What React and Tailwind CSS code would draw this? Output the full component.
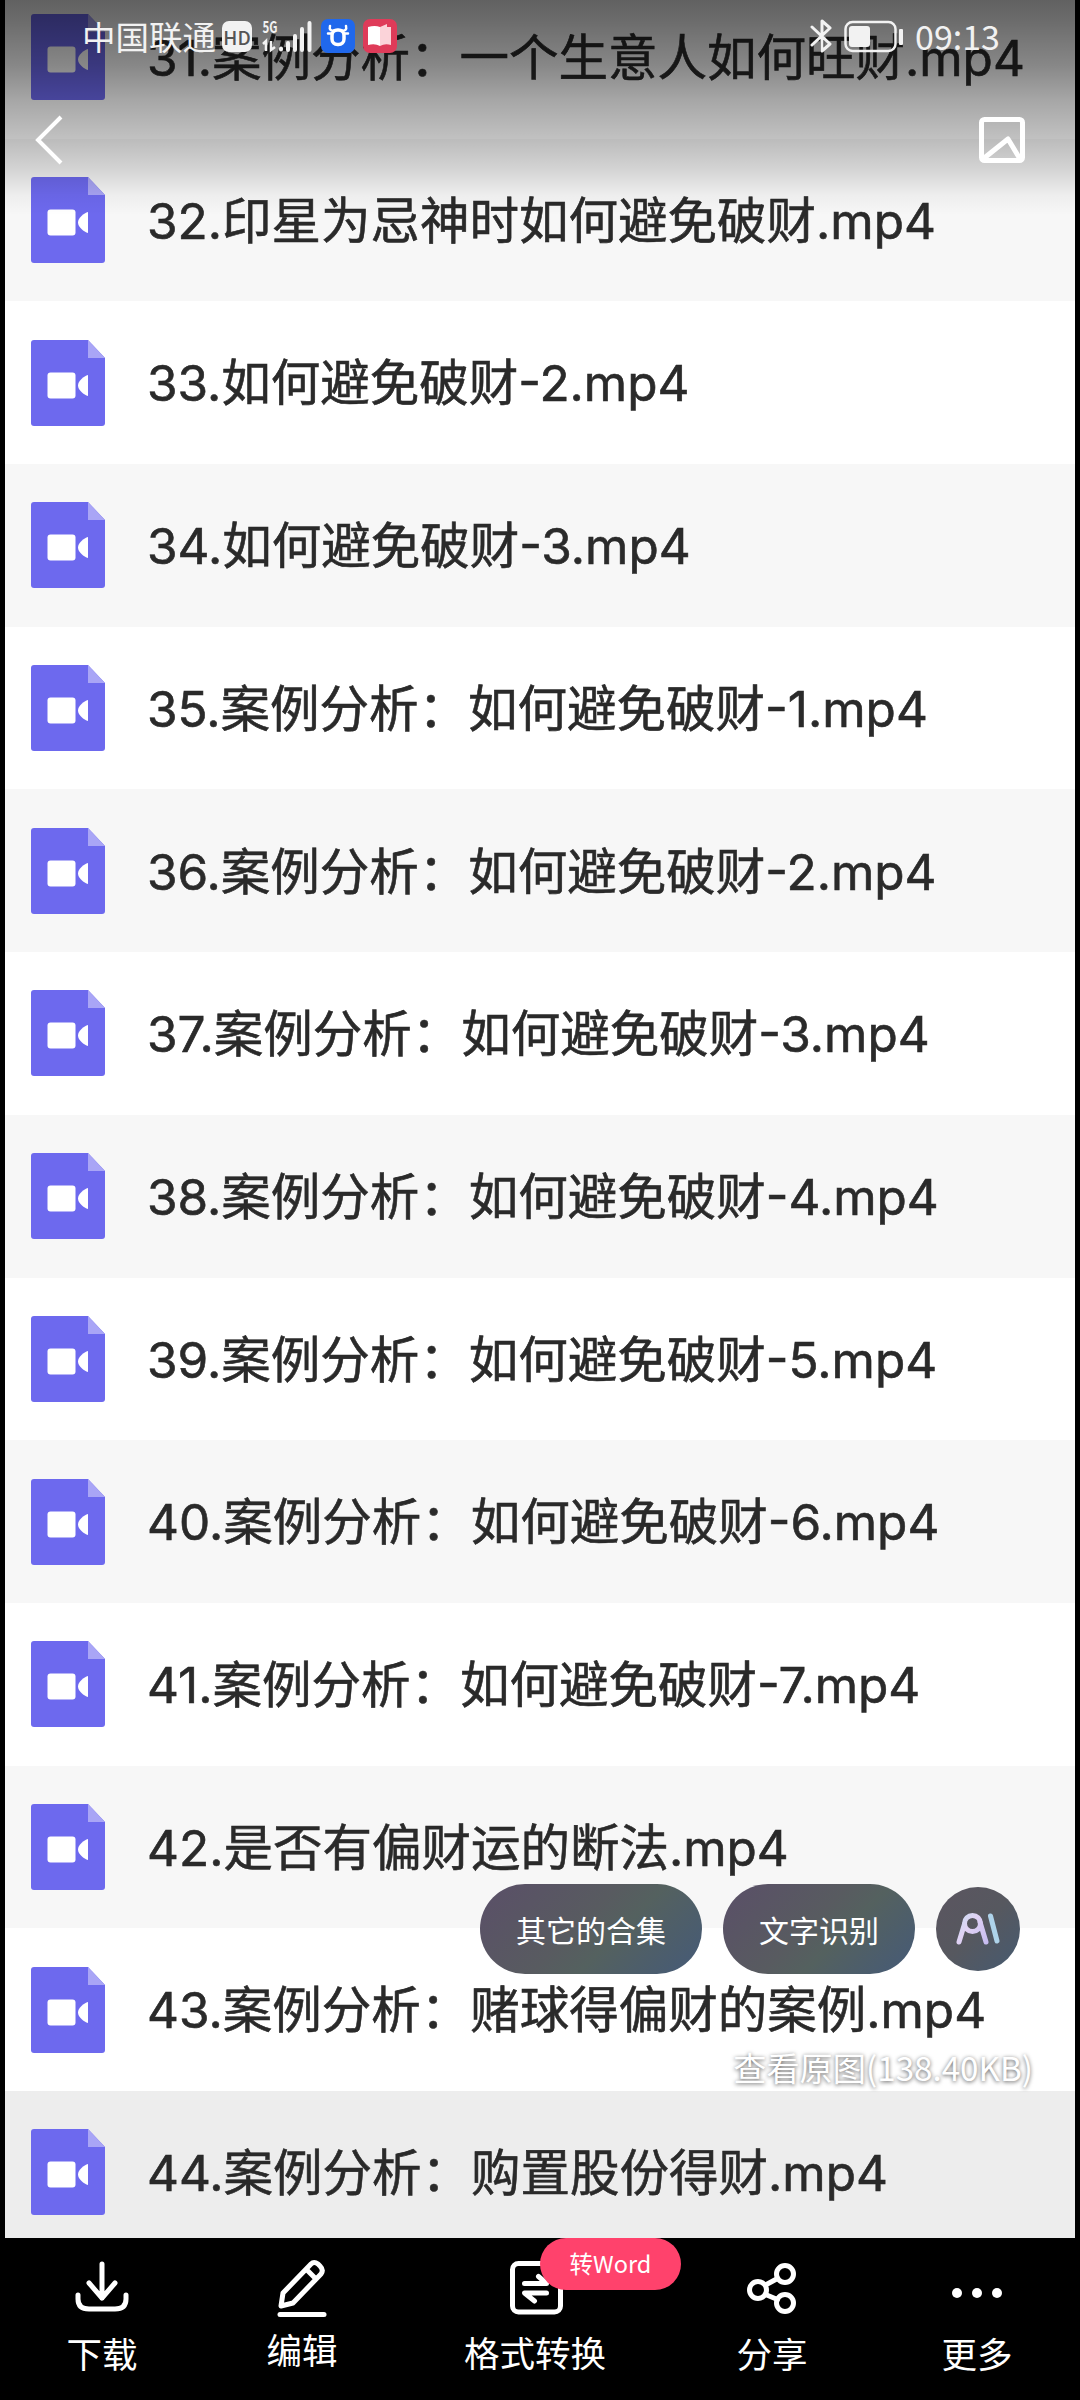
import React from "react";

const fontStack = "font-['Inter','Noto_Sans_CJK_SC',sans-serif]";
const uiFont = "font-['Noto_Sans_CJK_SC',sans-serif]";

const files = [
  "31.案例分析：一个生意人如何旺财.mp4",
  "32.印星为忌神时如何避免破财.mp4",
  "33.如何避免破财-2.mp4",
  "34.如何避免破财-3.mp4",
  "35.案例分析：如何避免破财-1.mp4",
  "36.案例分析：如何避免破财-2.mp4",
  "37.案例分析：如何避免破财-3.mp4",
  "38.案例分析：如何避免破财-4.mp4",
  "39.案例分析：如何避免破财-5.mp4",
  "40.案例分析：如何避免破财-6.mp4",
  "41.案例分析：如何避免破财-7.mp4",
  "42.是否有偏财运的断法.mp4",
  "43.案例分析：赌球得偏财的案例.mp4",
  "44.案例分析：购置股份得财.mp4",
];

const VideoFileIcon = () => (
  <svg className="w-[74px] h-[86px] shrink-0" viewBox="0 0 74 86">
    <path d="M3 0H57L74 18V83a3 3 0 0 1-3 3H3a3 3 0 0 1-3-3V3a3 3 0 0 1 3-3Z" fill="#6d69ee" />
    <path d="M57 0L74 18H57Z" fill="#a9a5f6" />
    <rect x="16.500" y="32.500" width="28" height="26" rx="3" fill="#fff" />
    <path d="M57 35v21c-4-1-10-6-10-10.500s6-9.500 10-10.500Z" fill="#fff" />
  </svg>
);

const FileRow = ({ name, index, last }) => {
  let bg = index % 2 === 0 ? "bg-white" : "bg-[#f7f7f7]";
  if (last) bg = "bg-[#ededed]";
  return (
    <li className={`flex h-[162.7px] shrink-0 items-center pl-[26px] ${bg}`}>
      <VideoFileIcon />
      <span className="ml-[42px] mt-[3px] whitespace-nowrap text-[49.5px] leading-none text-[#2a2a2a] [-webkit-text-stroke:0.6px_#2a2a2a]">
        {name}
      </span>
    </li>
  );
};

const StatusBar = () => (
  <div className={`flex h-[72px] items-center pl-[77px] pr-[75px] text-[#f2f2f2] ${uiFont}`}>
    <span className="text-[33.5px] leading-none">中国联通</span>
    <span className="ml-[6px] flex h-[31px] w-[30px] items-center justify-center rounded-[7px] bg-[#f2f2f2] text-[19px] font-medium leading-none text-[#555]">
      HD
    </span>
    <svg className="ml-[10px] h-[34px] w-[52px] overflow-visible" viewBox="0 0 52 34" fill="none" stroke="#f2f2f2">
      <text x="0.500" y="14" fontSize="16" fontWeight="700" fill="#f2f2f2" stroke="none" textLength="15" lengthAdjust="spacingAndGlyphs">5G</text>
      <path d="M1 25l3-3v10M9 22v9l4-3" strokeWidth="2.500" />
      <path d="M19 29.500v1M26 24v7M33 17v14M40 10v21M47.500 4v27" strokeWidth="4" strokeLinecap="round" />
    </svg>
    <svg className="ml-[7px] h-[34px] w-[34px]" viewBox="0 0 34 34">
      <rect width="34" height="34" rx="7" fill="#2068ec" />
      <rect x="11" y="11" width="12" height="14.500" rx="5.500" fill="none" stroke="#fff" strokeWidth="3.500" />
      <path d="M9 7c-1 4 1 5 4 4.500M25 7c1 4-1 5-4 4.500M7 14.500h4M27 14.500h-4" fill="none" stroke="#fff" strokeWidth="2.500" strokeLinecap="round" />
    </svg>
    <svg className="ml-2 h-[34px] w-[34px]" viewBox="0 0 34 34">
      <rect width="34" height="34" rx="7" fill="#df3b59" />
      <path d="M5 8q7-2 12 0v19q-5-3-12-1Z" fill="#fff" />
      <path d="M17 8l7-3v3h4v18q-6-2-11 1Z" fill="#fbd3d9" />
    </svg>
    <div className="ml-auto flex items-center">
      <svg className="h-[34px] w-[22px]" viewBox="0 0 22 34" fill="none" stroke="#f2f2f2" strokeWidth="3" strokeLinejoin="round" strokeLinecap="round">
        <path d="M2 8l18 17-8 7V2l8 7L2 26" />
      </svg>
      <svg className="ml-3 h-[34px] w-[60px]" viewBox="0 0 60 34" fill="none">
        <rect x="1.500" y="3" width="50" height="29" rx="7" stroke="#f2f2f2" strokeWidth="2.500" />
        <rect x="5" y="7" width="21" height="21" rx="3" fill="#f2f2f2" />
        <rect x="55" y="10" width="4" height="16" rx="1" fill="#f2f2f2" />
      </svg>
      <span className="ml-[11px] text-[34px] leading-none">09:13</span>
    </div>
  </div>
);

const TopBar = () => (
  <div className="flex h-[135px] items-center justify-between pl-[30px] pr-[50px]">
    <svg className="h-[50px] w-[28px]" viewBox="0 0 28 50" fill="none" stroke="#fff" strokeWidth="4">
      <path d="M26 2L3 25l23 23" />
    </svg>
    <svg className="h-[46px] w-[46px]" viewBox="0 0 46 46" fill="none" stroke="#fff" strokeWidth="5" strokeLinejoin="round">
      <rect x="2.500" y="2.500" width="41" height="41" rx="3" />
      <path d="M4 42L29 22l12 20" />
    </svg>
  </div>
);

const pill =
  "flex h-[90px] items-center justify-center rounded-full bg-[linear-gradient(135deg,#5a4f68_0%,#585b60_45%,#54615f_60%,#455a78_100%)] text-[30px] leading-none text-white";

const FloatingActions = () => (
  <div className={`absolute right-[44px] top-[1884px] flex flex-col items-end ${uiFont}`}>
    <div className="mr-[16px] flex items-center gap-[21px]">
      <button className={`${pill} w-[222px]`}>其它的合集</button>
      <button className={`${pill} w-[192px]`}>文字识别</button>
      <button className="flex h-[84px] w-[84px] items-center justify-center rounded-full bg-[linear-gradient(135deg,#5b5560_0%,#56585f_50%,#465a70_100%)]">
        <svg className="h-[34px] w-[46px]" viewBox="0 0 46 34" fill="none" strokeWidth="5" strokeLinecap="round">
          <defs>
            <linearGradient id="ai" x1="0" y1="0" x2="46" y2="34" gradientUnits="userSpaceOnUse">
              <stop offset="0" stopColor="#c5e0f2" />
              <stop offset="0.35" stopColor="#e0d2f4" />
              <stop offset="1" stopColor="#b9b0ee" />
            </linearGradient>
          </defs>
          <path d="M4 30l5.500-18M25 10l6 20" stroke="url(#ai)" />
          <circle cx="17.500" cy="11.500" r="8" stroke="url(#ai)" />
          <path d="M35.500 4l6.500 25" stroke="#aed3ea" />
        </svg>
      </button>
    </div>
    <span className="mt-[76px] mr-[3px] text-[33.2px] leading-none text-white [text-shadow:0_1px_4px_rgba(0,0,0,0.65)]">
      查看原图(138.40KB)
    </span>
  </div>
);

const iconProps = {
  fill: "none",
  stroke: "#fff",
  strokeWidth: 5,
  strokeLinecap: "round",
  strokeLinejoin: "round",
  viewBox: "0 0 60 60",
  className: "h-[60px] w-[60px] overflow-visible",
};

const DownloadIcon = () => (
  <svg {...iconProps}>
    <path d="M30 8v34M17 27l13 15 13-15M6 39v4q0 10 11 10h26q11 0 11-10v-4" />
  </svg>
);

const EditIcon = () => (
  <svg {...iconProps}>
    <path d="M8 58.500h44" />
    <path d="M9 50l2-13L39 8q3-3 7 0l2 2q4 4 1 8L21 47Z M35 14l9 9" />
  </svg>
);

const ConvertIcon = () => (
  <svg {...iconProps}>
    <rect x="7.500" y="7.500" width="48" height="48.500" rx="6" />
    <path d="M19.500 27.500h22l-8-7M41.500 37h-22l10 8" />
  </svg>
);

const ShareIcon = () => (
  <svg {...iconProps}>
    <circle cx="16" cy="34" r="8.500" />
    <circle cx="43" cy="18" r="8.500" />
    <circle cx="43" cy="47" r="8.500" />
    <path d="M23.500 29l12-6.500M23.500 38.500l12 5" />
  </svg>
);

const MoreIcon = () => (
  <svg {...iconProps} stroke="none" fill="#fff">
    <circle cx="10" cy="37" r="5" />
    <circle cx="30" cy="37" r="5" />
    <circle cx="50" cy="37" r="5" />
  </svg>
);

const BottomBar = () => (
  <nav className={`flex h-[162px] bg-black pt-[18px] text-[35.5px] leading-none text-white ${uiFont}`}>
    <button className="flex w-[204px] flex-col items-center">
      <DownloadIcon />
      <span className="mt-[19px]">下载</span>
    </button>
    <button className="flex w-[196px] flex-col items-center">
      <EditIcon />
      <span className="mt-[15px]">编辑</span>
    </button>
    <button className="relative flex w-[270px] flex-col items-center">
      <ConvertIcon />
      <span className="mt-[18px]">格式转换</span>
      <span className="absolute left-[140px] -top-[18px] flex h-[52px] w-[141px] items-center justify-center rounded-full bg-[#ff426c] text-[23.5px]">
        转Word
      </span>
    </button>
    <button className="flex w-[204px] flex-col items-center">
      <ShareIcon />
      <span className="mt-[19px]">分享</span>
    </button>
    <button className="flex w-[206px] flex-col items-center">
      <MoreIcon />
      <span className="mt-[19px]">更多</span>
    </button>
  </nav>
);

export default function App() {
  return (
    <div className={`relative h-[2400px] w-[1080px] overflow-hidden bg-black ${fontStack}`}>
      <div className="mx-[5px] h-[2238px] overflow-hidden bg-white">
        <ul className="-mt-[24px] flex flex-col">
          {files.map((name, i) => (
            <FileRow key={name} name={name} index={i} last={i === files.length - 1} />
          ))}
        </ul>
      </div>

      {/* header sits over the scrolled list */}
      <header className="absolute inset-x-[5px] top-0 h-[215px] bg-[linear-gradient(180deg,rgba(0,0,0,0.62)_0px,rgba(0,0,0,0.58)_20px,rgba(0,0,0,0.47)_65px,rgba(0,0,0,0.35)_100px,rgba(0,0,0,0.24)_140px,rgba(0,0,0,0.14)_170px,rgba(0,0,0,0.04)_195px,rgba(0,0,0,0)_215px)]">
        <StatusBar />
        <TopBar />
      </header>

      <FloatingActions />
      <BottomBar />
    </div>
  );
}
